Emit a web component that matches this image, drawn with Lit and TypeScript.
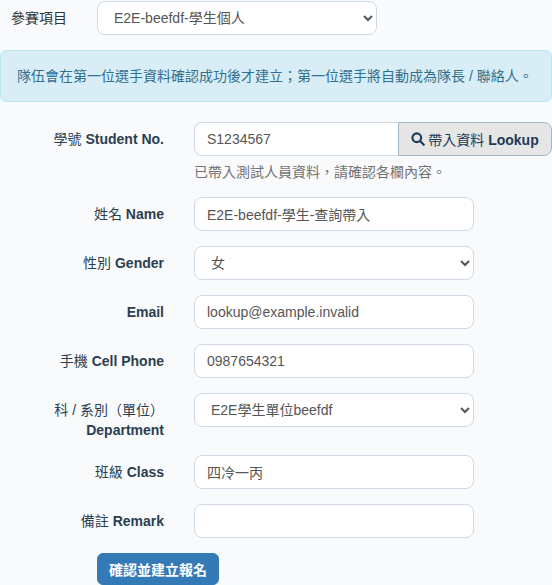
import { LitElement, html, css } from "lit";
import { customElement } from "lit/decorators.js";

const FONT = css`"Liberation Sans", "Noto Sans CJK TC", sans-serif`;

@customElement("app-root")
export class AppRoot extends LitElement {
  static styles = css`
    :host {
      display: block;
      width: 552px;
      height: 585px;
      overflow: hidden;
      background: #f8fafc;
      font-family: ${FONT};
      font-size: 14px;
      line-height: 20px;
      color: #2c3e50;
    }
    * { box-sizing: border-box; }
    .top {
      display: flex;
      align-items: center;
      padding: 1px 0 0 11px;
    }
    .top-label { width: 86px; color: #333; }
    .control {
      height: 34px;
      border: 1px solid #ced9e5;
      border-radius: 8px;
      background: #fff;
      color: #555;
      font-family: ${FONT};
      font-size: 14px;
      padding: 6px 12px;
      outline: none;
      width: 280px;
      display: block;
      margin: 0;
    }
    .alert {
      margin-top: 15px;
      height: 52px;
      padding: 15px 16px;
      background: #d9edf7;
      border: 1px solid #bce8f1;
      border-radius: 6px;
      color: #31708f;
      white-space: nowrap;
    }
    .form { padding-top: 20px; display: flex; flex-direction: column; gap: 15px; }
    .row {
      display: grid;
      grid-template-columns: 164px 1fr;
      column-gap: 30px;
      align-items: start;
    }
    label {
      text-align: right;
      font-weight: 700;
      padding-top: 7px;
      color: #2c3e50;
    }
    label .cjk { font-weight: 400; }
    .group { display: flex; }
    .group .control {
      width: 204px;
      border-radius: 8px 0 0 8px;
      border-right: none;
    }
    .lookup {
      width: 154px;
      height: 34px;
      margin: 0;
      padding: 0;
      border: 1px solid #a3b4c6;
      border-radius: 0 8px 8px 0;
      background: #e6e6e6;
      color: #1f3a56;
      font-family: ${FONT};
      font-size: 14px;
      font-weight: 700;
      display: flex;
      align-items: center;
      justify-content: center;
      gap: 3px;
      white-space: nowrap;
    }
    .lookup .cjk { font-weight: 400; }
    .lookup svg { width: 14px; height: 14px; display: block; flex: none; }
    .help { margin-top: 6px; line-height: 20px; color: #737373; }
    .submit-row { padding-left: 97px; }
    .submit {
      display: block;
      width: 122px;
      height: 32px;
      border: 1px solid #337ab7;
      border-radius: 6px;
      background: #337ab7;
      color: #fff;
      font-family: ${FONT};
      font-size: 14px;
      font-weight: 700;
      padding: 0;
    }
  `;

  private field(zh: string, en: string, value: string) {
    return html`<div class="row">
      <label><span class="cjk">${zh}</span> ${en}</label>
      <input class="control" .value=${value} />
    </div>`;
  }

  render() {
    return html`
      <div lang="zh-TW">
        <div class="top">
          <span class="top-label">參賽項目</span>
          <select class="control"><option>E2E-beefdf-學生個人</option></select>
        </div>
        <div class="alert">隊伍會在第一位選手資料確認成功後才建立；第一位選手將自動成為隊長 / 聯絡人。</div>
        <div class="form">
          <div class="row">
            <label><span class="cjk">學號</span> Student No.</label>
            <div>
              <div class="group">
                <input class="control" .value=${"S1234567"} />
                <button class="lookup">
                  <svg viewBox="0 0 16 16" fill="none" stroke="#1f3a56" stroke-width="2.4" stroke-linecap="round">
                    <circle cx="6.6" cy="6.6" r="5"></circle>
                    <path d="M10.4 10.4 L14.6 14.6"></path>
                  </svg>
                  <span><span class="cjk">帶入資料</span> Lookup</span>
                </button>
              </div>
              <div class="help">已帶入測試人員資料，請確認各欄內容。</div>
            </div>
          </div>
          ${this.field("姓名", "Name", "E2E-beefdf-學生-查詢帶入")}
          <div class="row">
            <label><span class="cjk">性別</span> Gender</label>
            <select class="control"><option>女</option></select>
          </div>
          <div class="row">
            <label>Email</label>
            <input class="control" .value=${"lookup@example.invalid"} />
          </div>
          ${this.field("手機", "Cell Phone", "0987654321")}
          <div class="row">
            <label><span class="cjk">科 / 系別（單位）</span><br />Department</label>
            <select class="control"><option>E2E學生單位beefdf</option></select>
          </div>
          ${this.field("班級", "Class", "四冷一丙")}
          ${this.field("備註", "Remark", "")}
          <div class="submit-row"><button class="submit">確認並建立報名</button></div>
        </div>
      </div>
    `;
  }
}
